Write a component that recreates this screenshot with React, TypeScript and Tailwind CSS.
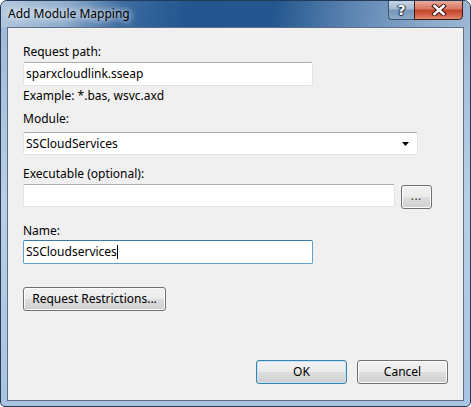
import React from 'react'

const font = { fontFamily: '"Noto Sans", "Open Sans", sans-serif' }

function Label({ children, className = '' }: { children: React.ReactNode; className?: string }) {
  return <div className={`h-4 leading-4 text-[12px] text-black ${className}`}>{children}</div>
}

function TextBox({ value, w, h = 'h-6', focused = false, caret = false }: { value?: string; w: string; h?: string; focused?: boolean; caret?: boolean }) {
  const border = focused
    ? 'border-[#5fa0d8] border-t-[#3d7bad]'
    : 'border-[#e2e3ea] border-t-[#abadb3]'
  return (
    <div className={`${w} ${h} border ${border} bg-white rounded-[2px] flex items-center px-[2px] text-[12px] text-black`}>
      <span>{value}</span>
      {caret && <span className="w-px h-[14px] bg-black" />}
    </div>
  )
}

function Button({ children, className = '', primary = false }: { children: React.ReactNode; className?: string; primary?: boolean }) {
  return (
    <div
      className={`h-6 rounded-[3px] border flex items-center justify-center text-[12px] text-black ${
        primary ? 'border-[#3c7fb1] shadow-[inset_0_0_0_1px_#c4e5f6]' : 'border-[#707070] shadow-[inset_0_0_0_1px_#fcfcfc]'
      } bg-[linear-gradient(#f2f2f2_0%,#ebebeb_48%,#dddddd_52%,#cfcfcf_100%)] ${className}`}
    >
      {children}
    </div>
  )
}

export default function App() {
  return (
    <div style={font} className="w-[471px] h-[407px] overflow-hidden bg-white">
      <div className="w-full h-full flex flex-col border border-[#243a57] rounded-t-[7px] rounded-b-[5px] bg-[linear-gradient(180deg,#9cb8d6_0%,#b9cfe6_50%,#a8c4e2_100%)] overflow-hidden">
        {/* title bar */}
        <div className="h-[26px] flex justify-between items-start bg-[linear-gradient(100deg,#b3c8de_0%,#8eaccd_14%,#3a6aa0_26%,#23568f_40%,#24578f_58%,#5f86b3_75%,#89a8c9_90%,#9db8d5_100%)]">
          <div className="pl-[7px] pt-[5px] text-[12px] leading-4 text-black [text-shadow:0_0_6px_#fff,0_0_10px_#fff]">Add Module Mapping</div>
          <div className="flex mr-[7px] -mt-px">
            <div className="w-[26px] h-[20px] border border-[#3a526d] rounded-bl-[4px] border-r-0 bg-[linear-gradient(#c7d6e6_0%,#a3bad2_45%,#7896b8_50%,#8eabc9_100%)] flex items-center justify-center">
              <span className="text-white font-bold text-[14px] leading-none [text-shadow:0_0_1px_#1b2a3c,1px_0_1px_#1b2a3c,-1px_0_1px_#1b2a3c,0_1px_1px_#1b2a3c]" style={{ fontFamily: '"DejaVu Sans", sans-serif' }}>?</span>
            </div>
            <div className="w-[49px] h-[20px] border border-[#3f1b17] rounded-br-[4px] bg-[linear-gradient(#e8aa9c_0%,#d7765f_45%,#c3412a_50%,#d4634a_80%,#e08d70_100%)] flex items-center justify-center">
              <svg width="16" height="12" viewBox="0 0 16 12">
                <path d="M3.5 2 L12.5 10 M12.5 2 L3.5 10" stroke="#3c1410" strokeWidth="4.5" strokeLinecap="square" />
                <path d="M3.5 2 L12.5 10 M12.5 2 L3.5 10" stroke="#ffffff" strokeWidth="2.6" strokeLinecap="square" />
              </svg>
            </div>
          </div>
        </div>

        {/* client area */}
        <div className="mx-[6px] mb-[5px] flex-1 border border-[#5e7088] bg-[#f0f0f0] pl-[15px] pt-[16px] flex flex-col">
          <Label>Request path:</Label>
          <div className="mt-[2px]">
            <TextBox value="sparxcloudlink.sseap" w="w-[290px]" />
          </div>
          <Label className="mt-[2px]">Example: *.bas, wsvc.axd</Label>
          <Label className="mt-[7px]">Module:</Label>
          <div className="mt-[5px] w-[395px] h-[23px] border border-[#e2e3ea] border-t-[#abadb3] bg-white rounded-[2px] flex items-center justify-between pl-[2px] pr-[8px] text-[12px]">
            <span>SSCloudServices</span>
            <svg width="7" height="4" viewBox="0 0 7 4">
              <path d="M0 0 H7 L3.5 4 Z" fill="#000" />
            </svg>
          </div>
          <Label className="mt-[11px]">Executable (optional):</Label>
          <div className="mt-[2px] flex items-start gap-[6px]">
            <TextBox w="w-[372px]" h="h-[23px]" />
            <Button className="w-[31px] mt-px">
              <span className="text-[10px] leading-none -mt-[2px] tracking-[1px]">...</span>
            </Button>
          </div>
          <Label className="mt-[14px]">Name:</Label>
          <div className="mt-px">
            <TextBox value="SSCloudservices" w="w-[290px]" focused caret />
          </div>
          <div className="mt-[23px]">
            <Button className="w-[143px]">Request Restrictions...</Button>
          </div>
          <div className="mt-[49px] flex justify-end gap-[10px] pr-[15px]">
            <Button primary className="w-[91px]">OK</Button>
            <Button className="w-[91px]">Cancel</Button>
          </div>
        </div>
      </div>
    </div>
  )
}
